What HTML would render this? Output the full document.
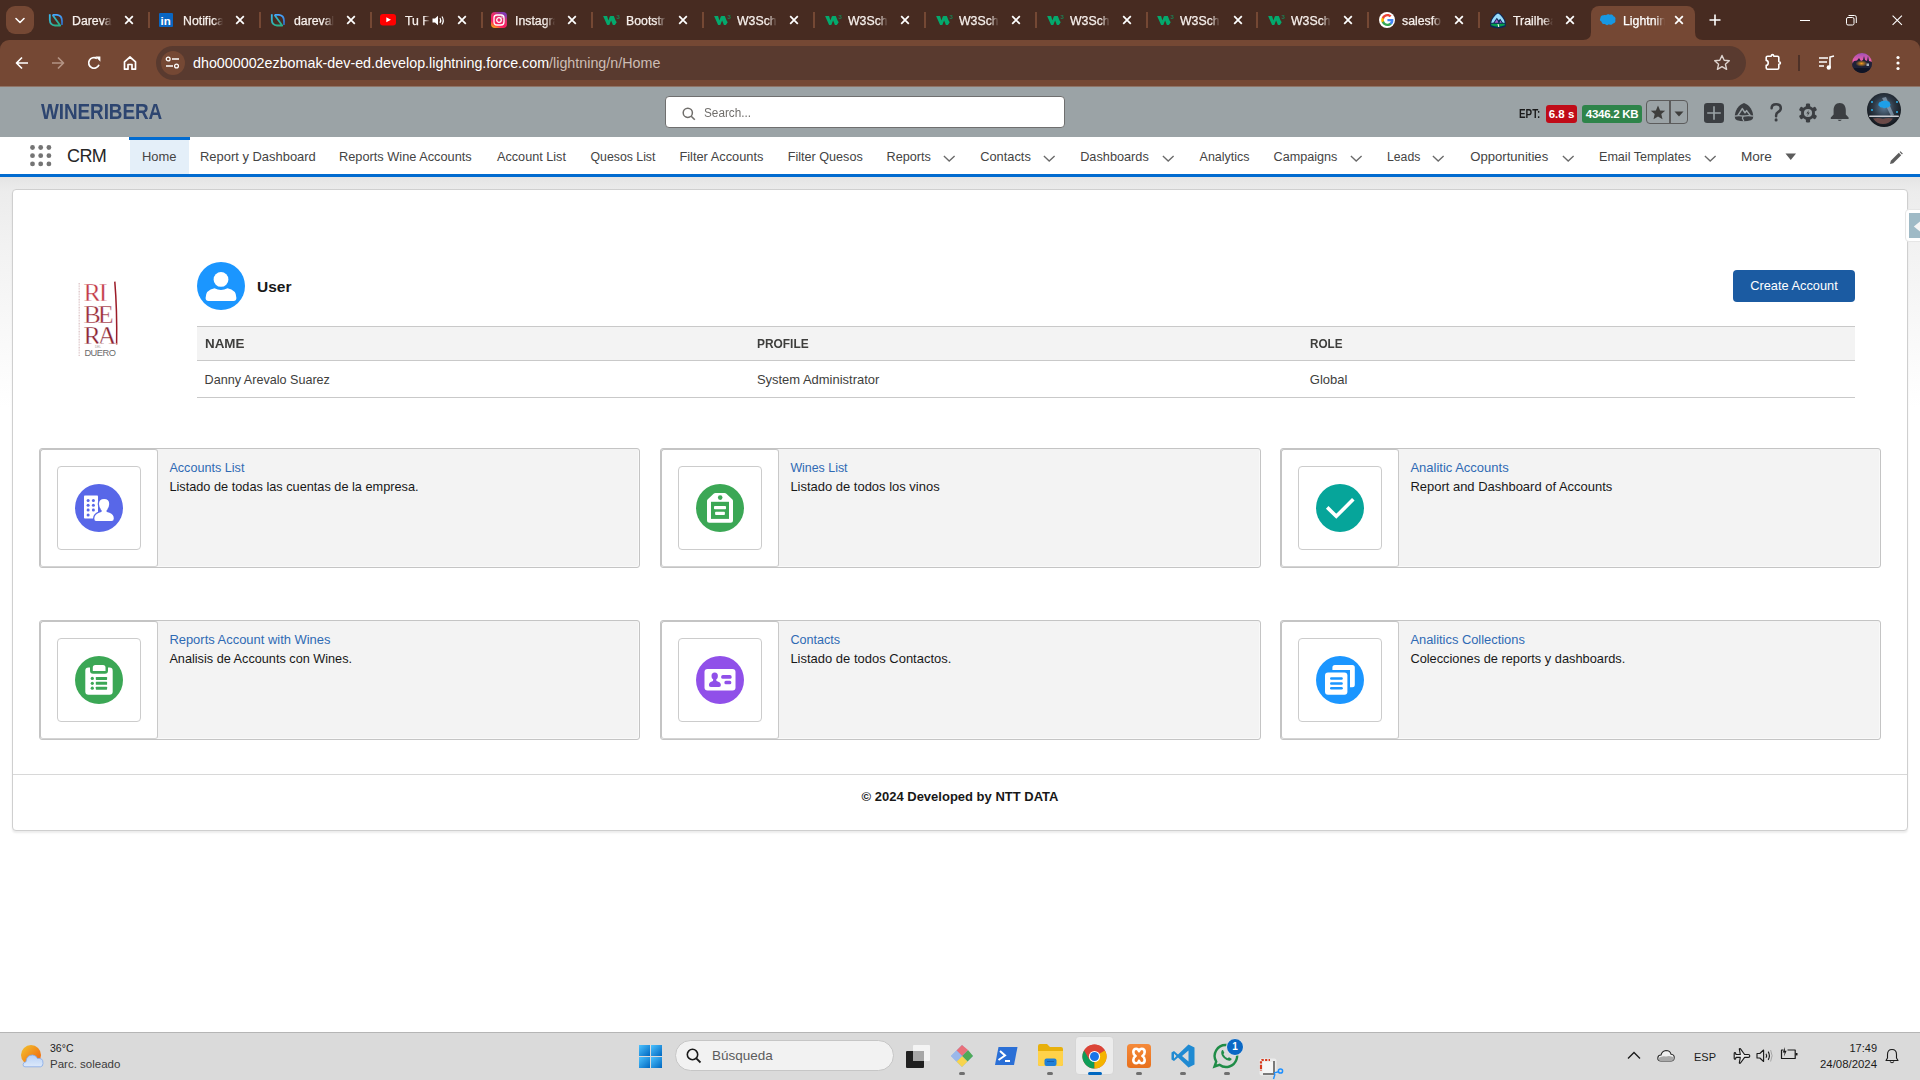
<!DOCTYPE html><html><head><meta charset="utf-8"><title>Lightning</title><style>
*{margin:0;padding:0;box-sizing:border-box}
html,body{width:1920px;height:1080px;overflow:hidden;background:#fff;font-family:"Liberation Sans", sans-serif}
.a{position:absolute}
.t{position:absolute;white-space:nowrap}
svg{position:absolute;overflow:visible}
</style></head><body>
<div class="a" style="left:0;top:0;width:1920px;height:50px;background:#472b21"></div>
<div class="a" style="left:6px;top:6px;width:28px;height:28px;border-radius:9px;background:#754834"></div>
<svg style="left:0;top:0" width="40" height="40"><path d="M16 18.5 L20 22.5 L24 18.5" fill="none" stroke="#fff" stroke-width="1.6" stroke-linecap="round" stroke-linejoin="round"/></svg>
<svg style="left:48px;top:12px" width="16" height="16"><defs><linearGradient id="dg0" x1="0" y1="0" x2="0.6" y2="1"><stop offset="0" stop-color="#3ab6ee"/><stop offset="1" stop-color="#2bb08a"/></linearGradient><linearGradient id="db0" x1="0" y1="0" x2="0" y2="1"><stop offset="0" stop-color="#46a6ff"/><stop offset="1" stop-color="#2f64b8"/></linearGradient></defs><path d="M1.8 2.3 V8 Q2 13.2 7 13.5 H12.2 L4.6 3" fill="none" stroke="url(#dg0)" stroke-width="1.8" stroke-linejoin="round"/><path d="M4.6 2.8 H9 Q14 3.3 14 9 V13" fill="none" stroke="url(#db0)" stroke-width="1.8"/></svg>
<div class="t" style="left:72px;top:13px;width:40px;overflow:hidden;font-size:12.3px;line-height:16px;color:#f7f0ec;-webkit-text-stroke:0.25px #f7f0ec;-webkit-mask-image:linear-gradient(to right,#000 76%,transparent 100%)">Dareval</div>
<svg style="left:124px;top:15px" width="10" height="10"><path d="M1.2 1.2 L8.8 8.8 M8.8 1.2 L1.2 8.8" stroke="#fff" stroke-width="1.75"/></svg>
<div class="a" style="left:148px;top:12px;width:2px;height:16px;background:#754834"></div>
<svg style="left:159px;top:13px" width="15" height="15"><rect width="14" height="14" fill="#0a66c2" rx="1"/><text x="1.6" y="12" font-family="Liberation Sans" font-weight="bold" font-size="11.5" fill="#fff">in</text></svg>
<div class="t" style="left:183px;top:13px;width:40px;overflow:hidden;font-size:12.3px;line-height:16px;color:#f7f0ec;-webkit-text-stroke:0.25px #f7f0ec;-webkit-mask-image:linear-gradient(to right,#000 76%,transparent 100%)">Notifica</div>
<svg style="left:235px;top:15px" width="10" height="10"><path d="M1.2 1.2 L8.8 8.8 M8.8 1.2 L1.2 8.8" stroke="#fff" stroke-width="1.75"/></svg>
<div class="a" style="left:259px;top:12px;width:2px;height:16px;background:#754834"></div>
<svg style="left:270px;top:12px" width="16" height="16"><defs><linearGradient id="dg2" x1="0" y1="0" x2="0.6" y2="1"><stop offset="0" stop-color="#3ab6ee"/><stop offset="1" stop-color="#2bb08a"/></linearGradient><linearGradient id="db2" x1="0" y1="0" x2="0" y2="1"><stop offset="0" stop-color="#46a6ff"/><stop offset="1" stop-color="#2f64b8"/></linearGradient></defs><path d="M1.8 2.3 V8 Q2 13.2 7 13.5 H12.2 L4.6 3" fill="none" stroke="url(#dg2)" stroke-width="1.8" stroke-linejoin="round"/><path d="M4.6 2.8 H9 Q14 3.3 14 9 V13" fill="none" stroke="url(#db2)" stroke-width="1.8"/></svg>
<div class="t" style="left:294px;top:13px;width:40px;overflow:hidden;font-size:12.3px;line-height:16px;color:#f7f0ec;-webkit-text-stroke:0.25px #f7f0ec;-webkit-mask-image:linear-gradient(to right,#000 76%,transparent 100%)">dareval</div>
<svg style="left:346px;top:15px" width="10" height="10"><path d="M1.2 1.2 L8.8 8.8 M8.8 1.2 L1.2 8.8" stroke="#fff" stroke-width="1.75"/></svg>
<div class="a" style="left:370px;top:12px;width:2px;height:16px;background:#754834"></div>
<svg style="left:380px;top:14px" width="16" height="12"><rect width="16" height="11.5" rx="3" fill="#ff0000"/><path d="M6.3 3.2 L11 5.75 L6.3 8.3Z" fill="#fff"/></svg>
<div class="t" style="left:405px;top:13px;width:25px;overflow:hidden;font-size:12.3px;line-height:16px;color:#f7f0ec;-webkit-text-stroke:0.25px #f7f0ec;-webkit-mask-image:linear-gradient(to right,#000 76%,transparent 100%)">Tu F</div>
<svg style="left:457px;top:15px" width="10" height="10"><path d="M1.2 1.2 L8.8 8.8 M8.8 1.2 L1.2 8.8" stroke="#fff" stroke-width="1.75"/></svg>
<div class="a" style="left:481px;top:12px;width:2px;height:16px;background:#754834"></div>
<svg style="left:491px;top:12px" width="16" height="16"><defs><linearGradient id="ig" x1="0" y1="1" x2="0.6" y2="0"><stop offset="0" stop-color="#fdd000"/><stop offset="0.35" stop-color="#fd1d5f"/><stop offset="0.75" stop-color="#e1306c"/><stop offset="1" stop-color="#833ab4"/></linearGradient></defs><rect width="16" height="16" rx="4" fill="url(#ig)"/><rect x="3" y="3" width="10" height="10" rx="3" fill="none" stroke="#fff" stroke-width="1.3"/><circle cx="8" cy="8" r="2.3" fill="none" stroke="#fff" stroke-width="1.3"/><circle cx="11" cy="5" r="0.7" fill="#fff"/></svg>
<div class="t" style="left:515px;top:13px;width:40px;overflow:hidden;font-size:12.3px;line-height:16px;color:#f7f0ec;-webkit-text-stroke:0.25px #f7f0ec;-webkit-mask-image:linear-gradient(to right,#000 76%,transparent 100%)">Instagra</div>
<svg style="left:567px;top:15px" width="10" height="10"><path d="M1.2 1.2 L8.8 8.8 M8.8 1.2 L1.2 8.8" stroke="#fff" stroke-width="1.75"/></svg>
<div class="a" style="left:591px;top:12px;width:2px;height:16px;background:#754834"></div>
<svg style="left:602px;top:14px" width="19" height="12"><path d="M1.1 1.9 H5.1 L6.4 6.4 L7.8 2.4 Q8 1.9 8.6 1.9 H11.8 L13.6 6.4 L14.7 8.2 L12.9 10.9 H10.9 L9.1 6.4 L7.3 10.9 H5.1Z" fill="#04a96d"/><text x="14.6" y="4.6" font-family="Liberation Sans" font-weight="bold" font-size="6.2" fill="#1b7a52">3</text></svg>
<div class="t" style="left:626px;top:13px;width:40px;overflow:hidden;font-size:12.3px;line-height:16px;color:#f7f0ec;-webkit-text-stroke:0.25px #f7f0ec;-webkit-mask-image:linear-gradient(to right,#000 76%,transparent 100%)">Bootstr</div>
<svg style="left:678px;top:15px" width="10" height="10"><path d="M1.2 1.2 L8.8 8.8 M8.8 1.2 L1.2 8.8" stroke="#fff" stroke-width="1.75"/></svg>
<div class="a" style="left:702px;top:12px;width:2px;height:16px;background:#754834"></div>
<svg style="left:713px;top:14px" width="19" height="12"><path d="M1.1 1.9 H5.1 L6.4 6.4 L7.8 2.4 Q8 1.9 8.6 1.9 H11.8 L13.6 6.4 L14.7 8.2 L12.9 10.9 H10.9 L9.1 6.4 L7.3 10.9 H5.1Z" fill="#04a96d"/><text x="14.6" y="4.6" font-family="Liberation Sans" font-weight="bold" font-size="6.2" fill="#1b7a52">3</text></svg>
<div class="t" style="left:737px;top:13px;width:40px;overflow:hidden;font-size:12.3px;line-height:16px;color:#f7f0ec;-webkit-text-stroke:0.25px #f7f0ec;-webkit-mask-image:linear-gradient(to right,#000 76%,transparent 100%)">W3Scho</div>
<svg style="left:789px;top:15px" width="10" height="10"><path d="M1.2 1.2 L8.8 8.8 M8.8 1.2 L1.2 8.8" stroke="#fff" stroke-width="1.75"/></svg>
<div class="a" style="left:813px;top:12px;width:2px;height:16px;background:#754834"></div>
<svg style="left:824px;top:14px" width="19" height="12"><path d="M1.1 1.9 H5.1 L6.4 6.4 L7.8 2.4 Q8 1.9 8.6 1.9 H11.8 L13.6 6.4 L14.7 8.2 L12.9 10.9 H10.9 L9.1 6.4 L7.3 10.9 H5.1Z" fill="#04a96d"/><text x="14.6" y="4.6" font-family="Liberation Sans" font-weight="bold" font-size="6.2" fill="#1b7a52">3</text></svg>
<div class="t" style="left:848px;top:13px;width:40px;overflow:hidden;font-size:12.3px;line-height:16px;color:#f7f0ec;-webkit-text-stroke:0.25px #f7f0ec;-webkit-mask-image:linear-gradient(to right,#000 76%,transparent 100%)">W3Scho</div>
<svg style="left:900px;top:15px" width="10" height="10"><path d="M1.2 1.2 L8.8 8.8 M8.8 1.2 L1.2 8.8" stroke="#fff" stroke-width="1.75"/></svg>
<div class="a" style="left:924px;top:12px;width:2px;height:16px;background:#754834"></div>
<svg style="left:935px;top:14px" width="19" height="12"><path d="M1.1 1.9 H5.1 L6.4 6.4 L7.8 2.4 Q8 1.9 8.6 1.9 H11.8 L13.6 6.4 L14.7 8.2 L12.9 10.9 H10.9 L9.1 6.4 L7.3 10.9 H5.1Z" fill="#04a96d"/><text x="14.6" y="4.6" font-family="Liberation Sans" font-weight="bold" font-size="6.2" fill="#1b7a52">3</text></svg>
<div class="t" style="left:959px;top:13px;width:40px;overflow:hidden;font-size:12.3px;line-height:16px;color:#f7f0ec;-webkit-text-stroke:0.25px #f7f0ec;-webkit-mask-image:linear-gradient(to right,#000 76%,transparent 100%)">W3Scho</div>
<svg style="left:1011px;top:15px" width="10" height="10"><path d="M1.2 1.2 L8.8 8.8 M8.8 1.2 L1.2 8.8" stroke="#fff" stroke-width="1.75"/></svg>
<div class="a" style="left:1035px;top:12px;width:2px;height:16px;background:#754834"></div>
<svg style="left:1046px;top:14px" width="19" height="12"><path d="M1.1 1.9 H5.1 L6.4 6.4 L7.8 2.4 Q8 1.9 8.6 1.9 H11.8 L13.6 6.4 L14.7 8.2 L12.9 10.9 H10.9 L9.1 6.4 L7.3 10.9 H5.1Z" fill="#04a96d"/><text x="14.6" y="4.6" font-family="Liberation Sans" font-weight="bold" font-size="6.2" fill="#1b7a52">3</text></svg>
<div class="t" style="left:1070px;top:13px;width:40px;overflow:hidden;font-size:12.3px;line-height:16px;color:#f7f0ec;-webkit-text-stroke:0.25px #f7f0ec;-webkit-mask-image:linear-gradient(to right,#000 76%,transparent 100%)">W3Scho</div>
<svg style="left:1122px;top:15px" width="10" height="10"><path d="M1.2 1.2 L8.8 8.8 M8.8 1.2 L1.2 8.8" stroke="#fff" stroke-width="1.75"/></svg>
<div class="a" style="left:1146px;top:12px;width:2px;height:16px;background:#754834"></div>
<svg style="left:1156px;top:14px" width="19" height="12"><path d="M1.1 1.9 H5.1 L6.4 6.4 L7.8 2.4 Q8 1.9 8.6 1.9 H11.8 L13.6 6.4 L14.7 8.2 L12.9 10.9 H10.9 L9.1 6.4 L7.3 10.9 H5.1Z" fill="#04a96d"/><text x="14.6" y="4.6" font-family="Liberation Sans" font-weight="bold" font-size="6.2" fill="#1b7a52">3</text></svg>
<div class="t" style="left:1180px;top:13px;width:40px;overflow:hidden;font-size:12.3px;line-height:16px;color:#f7f0ec;-webkit-text-stroke:0.25px #f7f0ec;-webkit-mask-image:linear-gradient(to right,#000 76%,transparent 100%)">W3Scho</div>
<svg style="left:1233px;top:15px" width="10" height="10"><path d="M1.2 1.2 L8.8 8.8 M8.8 1.2 L1.2 8.8" stroke="#fff" stroke-width="1.75"/></svg>
<div class="a" style="left:1256px;top:12px;width:2px;height:16px;background:#754834"></div>
<svg style="left:1267px;top:14px" width="19" height="12"><path d="M1.1 1.9 H5.1 L6.4 6.4 L7.8 2.4 Q8 1.9 8.6 1.9 H11.8 L13.6 6.4 L14.7 8.2 L12.9 10.9 H10.9 L9.1 6.4 L7.3 10.9 H5.1Z" fill="#04a96d"/><text x="14.6" y="4.6" font-family="Liberation Sans" font-weight="bold" font-size="6.2" fill="#1b7a52">3</text></svg>
<div class="t" style="left:1291px;top:13px;width:40px;overflow:hidden;font-size:12.3px;line-height:16px;color:#f7f0ec;-webkit-text-stroke:0.25px #f7f0ec;-webkit-mask-image:linear-gradient(to right,#000 76%,transparent 100%)">W3Scho</div>
<svg style="left:1343px;top:15px" width="10" height="10"><path d="M1.2 1.2 L8.8 8.8 M8.8 1.2 L1.2 8.8" stroke="#fff" stroke-width="1.75"/></svg>
<div class="a" style="left:1367px;top:12px;width:2px;height:16px;background:#754834"></div>
<svg style="left:1379px;top:12px" width="16" height="16"><circle cx="8" cy="8" r="8" fill="#fff"/><g transform="translate(8.3 8) scale(1.3) translate(-7.9 -8)"><path d="M12.6 8.1c0-.3 0-.6-.1-.9H8v1.7h2.6c-.1.6-.5 1.1-1 1.4v1.2h1.6c.9-.9 1.4-2.1 1.4-3.4z" fill="#4285f4"/><path d="M8 12.7c1.3 0 2.4-.4 3.2-1.2L9.6 10.3c-.4.3-1 .5-1.6.5-1.2 0-2.3-.8-2.6-2H3.7v1.2C4.5 11.6 6.1 12.7 8 12.7z" fill="#34a853"/><path d="M5.4 8.8c-.1-.3-.1-.5-.1-.8s0-.5.1-.8V6H3.7C3.4 6.6 3.2 7.3 3.2 8s.2 1.4.5 2l1.7-1.2z" fill="#fbbc05"/><path d="M8 5.2c.7 0 1.3.2 1.8.7l1.4-1.4C10.4 3.7 9.3 3.3 8 3.3 6.1 3.3 4.5 4.4 3.7 6l1.7 1.2c.3-1.2 1.4-2 2.6-2z" fill="#ea4335"/></g></svg>
<div class="t" style="left:1402px;top:13px;width:40px;overflow:hidden;font-size:12.3px;line-height:16px;color:#f7f0ec;-webkit-text-stroke:0.25px #f7f0ec;-webkit-mask-image:linear-gradient(to right,#000 76%,transparent 100%)">salesfo</div>
<svg style="left:1454px;top:15px" width="10" height="10"><path d="M1.2 1.2 L8.8 8.8 M8.8 1.2 L1.2 8.8" stroke="#fff" stroke-width="1.75"/></svg>
<div class="a" style="left:1478px;top:12px;width:2px;height:16px;background:#754834"></div>
<svg style="left:1488px;top:10px" width="20" height="20"><path d="M10 2.2 Q12.5 3.2 15 6.5 Q17.8 10 17.8 13 V15.5 Q17.8 16.5 16.5 17 Q10 19.6 3.5 17 Q2.2 16.5 2.2 15.5 V13 Q2.2 10 5 6.5 Q7.5 3.2 10 2.2Z" fill="#0b2a5a"/><path d="M10 3.6 Q12 4.4 14.2 7.3 Q16.5 10.2 16.8 12.8 H3.2 Q3.5 10.2 5.8 7.3 Q8 4.4 10 3.6Z" fill="#98dbfa"/><path d="M5.3 13 L8.8 7.8 L10.8 10.3 L12.2 8.8 L15 13Z" fill="#0b2a5a"/><path d="M6.6 12.8 L8.9 9.3 L10.4 12.8Z M11.4 12.8 L12.3 10.4 L13.8 12.8Z" fill="#a865c9"/><path d="M3.2 13.7 H16.8 V15.3 Q10 18.2 3.2 15.3Z" fill="#05a04c"/><path d="M10 14 L10.8 17" stroke="#fff" stroke-width="1"/></svg>
<div class="t" style="left:1513px;top:13px;width:40px;overflow:hidden;font-size:12.3px;line-height:16px;color:#f7f0ec;-webkit-text-stroke:0.25px #f7f0ec;-webkit-mask-image:linear-gradient(to right,#000 76%,transparent 100%)">Trailhea</div>
<svg style="left:1565px;top:15px" width="10" height="10"><path d="M1.2 1.2 L8.8 8.8 M8.8 1.2 L1.2 8.8" stroke="#fff" stroke-width="1.75"/></svg>
<svg style="left:432px;top:15px" width="13" height="11"><path d="M0.5 3.5 L3 3.5 L6 0.8 L6 10.2 L3 7.5 L0.5 7.5Z" fill="#fff"/><path d="M8 3 Q9.5 5.5 8 8" fill="none" stroke="#fff" stroke-width="1.2"/><path d="M10 1.5 Q12.5 5.5 10 9.5" fill="none" stroke="#fff" stroke-width="1.2"/></svg>
<div class="a" style="left:1591px;top:6px;width:104px;height:36px;background:#754834;border-radius:8px 8px 0 0"></div>
<svg style="left:1583px;top:32px" width="8" height="8"><path d="M0 8 Q8 8 8 0 L8 8Z" fill="#754834"/></svg>
<svg style="left:1695px;top:32px" width="8" height="8"><path d="M8 8 Q0 8 0 0 L0 8Z" fill="#754834"/></svg>
<svg style="left:1599px;top:14px" width="17" height="12"><path d="M7 1.2 C8 0.2 9.6 0 10.8 0.8 C12 0 14 0.6 14.5 2.2 C16.2 2.6 17 4.4 16.3 6 C17 7.6 15.8 9.5 14 9.4 C13.2 10.9 11.2 11.2 10 10.3 C8.9 11.5 6.8 11.4 6 10 C4.3 10.5 2.6 9.4 2.6 7.8 C0.9 7.4 0.3 5.3 1.5 4.1 C1.1 2.3 3 0.6 4.9 1.3 C5.5 0.9 6.3 0.9 7 1.2Z" fill="#1798e3"/></svg>
<div class="t" style="left:1623px;top:13px;width:42px;overflow:hidden;font-size:12.3px;line-height:16px;color:#fff;-webkit-text-stroke:0.25px #fff;-webkit-mask-image:linear-gradient(to right,#000 76%,transparent 100%)">Lightning</div>
<svg style="left:1674px;top:15px" width="10" height="10"><path d="M1.2 1.2 L8.8 8.8 M8.8 1.2 L1.2 8.8" stroke="#fff" stroke-width="1.75"/></svg>
<svg style="left:1709px;top:14px" width="12" height="12"><path d="M6 0.5 V11.5 M0.5 6 H11.5" stroke="#fff" stroke-width="1.6"/></svg>
<div class="a" style="left:1800px;top:20px;width:10px;height:1px;background:#fff"></div>
<svg style="left:1846px;top:15px" width="11" height="11"><rect x="0.5" y="2.5" width="7.5" height="7.5" rx="1.5" fill="none" stroke="#fff" stroke-width="1"/><path d="M2.5 0.5 H8.5 Q10.3 0.5 10.3 2.3 V8" fill="none" stroke="#fff" stroke-width="1"/></svg>
<svg style="left:1892px;top:15px" width="11" height="11"><path d="M0.6 0.6 L9.9 9.9 M9.9 0.6 L0.6 9.9" stroke="#fff" stroke-width="1.1"/></svg>
<div class="a" style="left:0;top:40px;width:1920px;height:46px;background:#754834;border-radius:9px 9px 0 0"></div>
<svg style="left:14px;top:55px" width="16" height="16"><path d="M14 8 H3 M8 2.5 L2.5 8 L8 13.5" fill="none" stroke="#fff" stroke-width="1.7" stroke-linejoin="round"/></svg>
<svg style="left:50px;top:55px" width="16" height="16"><path d="M2 8 H13 M8 2.5 L13.5 8 L8 13.5" fill="none" stroke="#b39384" stroke-width="1.7" stroke-linejoin="round"/></svg>
<svg style="left:86px;top:55px" width="16" height="16"><path d="M12.98 9.71 A5.3 5.3 0 1 1 10.9 3.5" fill="none" stroke="#fff" stroke-width="1.7"/><path d="M9.3 1.6 H14.4 V6.7Z" fill="#fff"/></svg>
<svg style="left:122px;top:55px" width="16" height="17"><path d="M2.5 14.2 V6.8 L8 2 L13.5 6.8 V14.2 H10 V9.5 H6 V14.2Z" fill="none" stroke="#fff" stroke-width="1.7" stroke-linejoin="round"/></svg>
<div class="a" style="left:156px;top:46px;width:1590px;height:34px;border-radius:17px;background:#593a2f"></div>
<div class="a" style="left:161px;top:51px;width:24px;height:24px;border-radius:12px;background:#754834"></div>
<svg style="left:165px;top:56px" width="16" height="14"><circle cx="3.2" cy="3" r="1.9" fill="none" stroke="#fff" stroke-width="1.3"/><path d="M7 3 H14" stroke="#fff" stroke-width="1.5"/><circle cx="11.5" cy="10" r="1.9" fill="none" stroke="#fff" stroke-width="1.3"/><path d="M1 10 H8" stroke="#fff" stroke-width="1.5"/></svg>
<div class="t" style="left:193px;top:54px;font-size:14.3px;line-height:18px;color:#fff">dho000002ezbomak-dev-ed.develop.lightning.force.com<span style="color:#cdbdb5">/lightning/n/Home</span></div>
<svg style="left:1713px;top:54px" width="18" height="18"><path d="M9 1.5 L11.2 6.3 L16.3 6.8 L12.4 10.2 L13.6 15.3 L9 12.6 L4.4 15.3 L5.6 10.2 L1.7 6.8 L6.8 6.3Z" fill="none" stroke="#ddd3ce" stroke-width="1.4" stroke-linejoin="round"/></svg>
<svg style="left:1763px;top:53px" width="20" height="20"><path d="M3.2 4.6 Q3.2 3.2 4.6 3.2 H8.2 Q8.4 1.6 9.5 1.6 Q10.6 1.6 10.8 3.2 H14.4 Q15.8 3.2 15.8 4.6 V8.6 Q17.4 8.8 17.4 9.9 Q17.4 11 15.8 11.2 V14.8 Q15.8 16.2 14.4 16.2 H4.6 Q3.2 16.2 3.2 14.8 V12.4 Q5.2 12.2 5.2 9.9 Q5.2 7.6 3.2 7.4Z" fill="none" stroke="#fff" stroke-width="1.6" stroke-linejoin="round"/></svg>
<div class="a" style="left:1798px;top:55px;width:2px;height:16px;background:#4e3127"></div>
<svg style="left:1818px;top:55px" width="18" height="16"><path d="M1 3 H10 M1 7 H9 M1 11 H6" stroke="#fff" stroke-width="1.6"/><path d="M12 12.5 V2 L16 1" fill="none" stroke="#fff" stroke-width="1.6"/><circle cx="10.8" cy="12.5" r="2.2" fill="#fff"/></svg>
<svg style="left:1852px;top:53px" width="20" height="20"><defs><clipPath id="pc"><circle cx="10" cy="10" r="10"/></clipPath><linearGradient id="pg" x1="0" y1="0" x2="0" y2="1"><stop offset="0" stop-color="#a050b8"/><stop offset="0.4" stop-color="#f060a8"/><stop offset="0.55" stop-color="#2a2340"/><stop offset="1" stop-color="#0d1420"/></linearGradient><radialGradient id="po" cx="0.5" cy="0.5" r="0.5"><stop offset="0" stop-color="#f39a1a"/><stop offset="1" stop-color="#f39a1a" stop-opacity="0"/></radialGradient></defs><g clip-path="url(#pc)"><rect width="20" height="20" fill="url(#pg)"/><path d="M0 12 L2 8 L5 7.5 L7 5 L9 8 L11 7 L12 3 L13 7 L15 8 L16 3 L17 8 L20 9 V20 H0Z" fill="#1f2238"/><ellipse cx="9.5" cy="10.5" rx="6" ry="3.2" fill="url(#po)"/><rect x="14.5" y="10.5" width="2.5" height="2.5" fill="#c8d4d8" opacity="0.8"/><path d="M0 15 H20 V20 H0Z" fill="#0c1220" opacity="0.8"/></g></svg>
<svg style="left:1895px;top:55px" width="6" height="16"><circle cx="3" cy="2.5" r="1.6" fill="#fff"/><circle cx="3" cy="8" r="1.6" fill="#fff"/><circle cx="3" cy="13.5" r="1.6" fill="#fff"/></svg>
<div class="a" style="left:0;top:86px;width:1920px;height:51px;background:#9ba3a6"></div>
<div class="a" style="left:0;top:86px;width:1920px;height:1px;background:#8f7467"></div>
<div class="t" style="left:41px;top:99px;font-size:22px;line-height:26px;font-weight:bold;color:#2d4570;transform:scaleX(0.86);transform-origin:0 0;letter-spacing:-0.1px">WINERIBERA</div>
<div class="a" style="left:665px;top:96px;width:400px;height:32px;border:1px solid #6f6f6f;border-radius:4px;background:#fff"></div>
<svg style="left:682px;top:107px" width="14" height="14"><circle cx="5.8" cy="5.8" r="4.6" fill="none" stroke="#706e6b" stroke-width="1.5"/><path d="M9.2 9.2 L12.8 12.8" stroke="#706e6b" stroke-width="1.6"/></svg>
<div class="t" style="left:703.5px;top:105px;font-size:12px;line-height:16px;color:#706e6b;transform:scaleX(0.98);transform-origin:0 0">Search...</div>
<div class="t" style="left:1519px;top:107px;font-size:12px;line-height:14px;font-weight:bold;color:#1a1a1a;transform:scaleX(0.82);transform-origin:0 0">EPT:</div>
<div class="a" style="left:1546px;top:105px;width:31px;height:18px;border-radius:3px;background:#c00b18"></div>
<div class="t" style="left:1546px;top:107px;width:31px;text-align:center;font-size:11.5px;line-height:14px;font-weight:bold;color:#fff">6.8 s</div>
<div class="a" style="left:1582px;top:105px;width:60px;height:18px;border-radius:3px;background:#2e844a"></div>
<div class="t" style="left:1582px;top:107px;width:60px;text-align:center;font-size:11.5px;line-height:14px;font-weight:bold;color:#fff;letter-spacing:-0.3px">4346.2 KB</div>
<div class="a" style="left:1646px;top:100px;width:42px;height:24px;border:1px solid #5c5c5c;border-radius:4px"></div>
<div class="a" style="left:1669px;top:100px;width:2px;height:24px;background:#5c5c5c"></div>
<svg style="left:1649px;top:104px" width="18" height="17"><path d="M9 1.5 L11.1 6.4 L16.2 6.8 L12.3 10.1 L13.5 15.3 L9 12.5 L4.5 15.3 L5.7 10.1 L1.8 6.8 L6.9 6.4Z" fill="#3e3e3c"/></svg>
<svg style="left:1674px;top:111px" width="10" height="6"><path d="M0.5 0.5 L9.5 0.5 L5 5.5Z" fill="#3e3e3c"/></svg>
<svg style="left:1704px;top:103px" width="20" height="20"><rect x="0" y="0" width="20" height="20" rx="3.2" fill="#3b3e42"/><path d="M10 3.2 V16.8 M3.2 10 H16.8" stroke="#9ba3a6" stroke-width="1.6"/></svg>
<svg style="left:1734px;top:102px" width="20" height="20"><path d="M0.8 15 C0.8 8.5 4.5 3 10 1 C15.5 3 19.2 8.5 19.2 15 Q19.2 17.6 17 18.3 Q10 20.3 3 18.3 Q0.8 17.6 0.8 15Z" fill="#3b3e42"/><path d="M3.8 13.6 L8.3 6.6 L11 10.8 L12.6 8.6 L16.4 13.6" fill="none" stroke="#9ba3a6" stroke-width="1.5" stroke-linejoin="round"/><path d="M0.5 14.2 Q5 13.2 9.2 14.2 L8.4 16.2 L10 19.5" fill="none" stroke="#9ba3a6" stroke-width="1.2"/><path d="M9.2 14.2 Q14.5 13 19.5 14.2" fill="none" stroke="#9ba3a6" stroke-width="1.2"/></svg>
<svg style="left:1770px;top:103px" width="13" height="19"><path d="M1.6 5.2 Q1.6 1.3 6.2 1.3 Q10.8 1.3 10.8 5.2 Q10.8 7.6 8 9.2 Q6.1 10.3 6.1 12.6 V13.3" fill="none" stroke="#3b3e42" stroke-width="2.5" stroke-linecap="round"/><circle cx="6.1" cy="16.9" r="1.55" fill="#3b3e42"/></svg>
<svg style="left:1798px;top:103px" width="20" height="20"><rect x="7.9" y="0.6" width="4.2" height="5" rx="1.2" fill="#3b3e42" transform="rotate(0 10 10)"/><rect x="7.9" y="0.6" width="4.2" height="5" rx="1.2" fill="#3b3e42" transform="rotate(60 10 10)"/><rect x="7.9" y="0.6" width="4.2" height="5" rx="1.2" fill="#3b3e42" transform="rotate(120 10 10)"/><rect x="7.9" y="0.6" width="4.2" height="5" rx="1.2" fill="#3b3e42" transform="rotate(180 10 10)"/><rect x="7.9" y="0.6" width="4.2" height="5" rx="1.2" fill="#3b3e42" transform="rotate(240 10 10)"/><rect x="7.9" y="0.6" width="4.2" height="5" rx="1.2" fill="#3b3e42" transform="rotate(300 10 10)"/><circle cx="10" cy="10" r="7" fill="#3b3e42"/><circle cx="10" cy="10" r="4.1" fill="#9ba3a6"/><path d="M10.9 6.9 L8.3 10.6 H10 L9.2 13.2 L11.8 9.4 H10.1Z" fill="#3b3e42"/></svg>
<svg style="left:1830px;top:102px" width="20" height="20"><path d="M9.7 1 C13.9 1 15.8 4.2 15.8 8.2 V12.6 L18.6 15.5 V17 H0.8 V15.5 L3.6 12.6 V8.2 C3.6 4.2 5.5 1 9.7 1Z" fill="#3b3e42"/><path d="M7.6 17.8 H11.8 Q9.7 20.4 7.6 17.8Z" fill="#3b3e42"/></svg>
<svg style="left:1867px;top:93px" width="34" height="34"><defs><radialGradient id="av" cx="0.5" cy="0.42" r="0.55"><stop offset="0" stop-color="#5d7a95"/><stop offset="0.55" stop-color="#2e3a47"/><stop offset="1" stop-color="#15191f"/></radialGradient><clipPath id="avc"><circle cx="17" cy="17" r="17"/></clipPath></defs><circle cx="17" cy="17" r="17" fill="url(#av)"/><g clip-path="url(#avc)"><path d="M15 5 L19 4 L27 22 L24 23Z" fill="#a9c3d8" opacity="0.55"/><path d="M11.5 11 Q11.5 9 13.5 9 Q14.5 7.5 16.5 8 Q18.5 6.8 20.5 8.2 Q23 8 23 10.5 Q24.5 12 22.5 13.5 Q21.5 15 19.5 14.5 Q17.5 15.8 15.5 14.5 Q13 15 12.5 13.3 Q10.5 12.5 11.5 11Z" fill="#1e9fe8"/><circle cx="5" cy="9" r="1" fill="#2fb4f0"/><circle cx="30" cy="9" r="1" fill="#2fb4f0"/><circle cx="5" cy="17" r="1" fill="#2fb4f0"/><circle cx="30" cy="19" r="1" fill="#2fb4f0"/><rect x="2" y="22.5" width="30" height="1.6" rx="0.8" fill="#c9ccd2"/><path d="M6 25.5 Q12 24.5 16 26 Q20 24.5 26 25.5 Q22 31 16 31 Q10 31 6 25.5Z" fill="#6a4a48"/></g></svg>
<div class="a" style="left:0;top:137px;width:1920px;height:37px;background:#fff"></div>
<div class="a" style="left:0;top:174px;width:1920px;height:3px;background:#016bd0"></div>
<svg style="left:30px;top:145px" width="22" height="22"><circle cx="2.5" cy="2.5" r="2.4" fill="#747474"/><circle cx="10.7" cy="2.5" r="2.4" fill="#747474"/><circle cx="18.9" cy="2.5" r="2.4" fill="#747474"/><circle cx="2.5" cy="10.7" r="2.4" fill="#747474"/><circle cx="10.7" cy="10.7" r="2.4" fill="#747474"/><circle cx="18.9" cy="10.7" r="2.4" fill="#747474"/><circle cx="2.5" cy="18.9" r="2.4" fill="#747474"/><circle cx="10.7" cy="18.9" r="2.4" fill="#747474"/><circle cx="18.9" cy="18.9" r="2.4" fill="#747474"/></svg>
<div class="t" style="left:67px;top:145px;font-size:18px;line-height:22px;color:#262626;letter-spacing:-0.6px">CRM</div>
<div class="a" style="left:130px;top:140px;width:59px;height:34px;background:#e4eff9"></div>
<div class="a" style="left:129px;top:137px;width:61px;height:3px;background:#016bd0"></div>
<div class="t" style="left:142.0px;top:149px;font-size:12.93px;line-height:16px;color:#444444">Home</div>
<div class="t" style="left:200.0px;top:149px;font-size:12.94px;line-height:16px;color:#444444">Report y Dashboard</div>
<div class="t" style="left:339.0px;top:149px;font-size:12.77px;line-height:16px;color:#444444">Reports Wine Accounts</div>
<div class="t" style="left:497.0px;top:149px;font-size:12.66px;line-height:16px;color:#444444">Account List</div>
<div class="t" style="left:590.5px;top:149px;font-size:12.3px;line-height:16px;color:#444444">Quesos List</div>
<div class="t" style="left:679.4px;top:149px;font-size:12.82px;line-height:16px;color:#444444">Filter Accounts</div>
<div class="t" style="left:787.7px;top:149px;font-size:12.64px;line-height:16px;color:#444444">Filter Quesos</div>
<div class="t" style="left:886.5px;top:149px;font-size:12.68px;line-height:16px;color:#444444">Reports</div>
<svg style="left:943.4px;top:154.5px" width="13" height="8"><path d="M0.9 0.9 L6.2 6 L11.6 0.9" fill="none" stroke="#6a6a6a" stroke-width="1.35"/></svg>
<div class="t" style="left:980.2px;top:149px;font-size:12.83px;line-height:16px;color:#444444">Contacts</div>
<svg style="left:1043.4px;top:154.5px" width="13" height="8"><path d="M0.9 0.9 L6.2 6 L11.6 0.9" fill="none" stroke="#6a6a6a" stroke-width="1.35"/></svg>
<div class="t" style="left:1080.2px;top:149px;font-size:12.73px;line-height:16px;color:#444444">Dashboards</div>
<svg style="left:1161.5px;top:154.5px" width="13" height="8"><path d="M0.9 0.9 L6.2 6 L11.6 0.9" fill="none" stroke="#6a6a6a" stroke-width="1.35"/></svg>
<div class="t" style="left:1199.6px;top:149px;font-size:12.49px;line-height:16px;color:#444444">Analytics</div>
<div class="t" style="left:1273.6px;top:149px;font-size:12.62px;line-height:16px;color:#444444">Campaigns</div>
<svg style="left:1350.0px;top:154.5px" width="13" height="8"><path d="M0.9 0.9 L6.2 6 L11.6 0.9" fill="none" stroke="#6a6a6a" stroke-width="1.35"/></svg>
<div class="t" style="left:1387.0px;top:149px;font-size:12.24px;line-height:16px;color:#444444">Leads</div>
<svg style="left:1432.3px;top:154.5px" width="13" height="8"><path d="M0.9 0.9 L6.2 6 L11.6 0.9" fill="none" stroke="#6a6a6a" stroke-width="1.35"/></svg>
<div class="t" style="left:1470.3px;top:149px;font-size:13.1px;line-height:16px;color:#444444">Opportunities</div>
<svg style="left:1562.0px;top:154.5px" width="13" height="8"><path d="M0.9 0.9 L6.2 6 L11.6 0.9" fill="none" stroke="#6a6a6a" stroke-width="1.35"/></svg>
<div class="t" style="left:1599.0px;top:149px;font-size:12.59px;line-height:16px;color:#444444">Email Templates</div>
<svg style="left:1704.3px;top:154.5px" width="13" height="8"><path d="M0.9 0.9 L6.2 6 L11.6 0.9" fill="none" stroke="#6a6a6a" stroke-width="1.35"/></svg>
<div class="t" style="left:1740.9px;top:149px;font-size:13.6px;line-height:16px;color:#444444">More</div>
<svg style="left:1785px;top:153px" width="12" height="8"><path d="M0.5 0.5 H11 L5.75 7Z" fill="#5c5c5c"/></svg>
<svg style="left:1889px;top:151px" width="14" height="14"><path d="M1 13 L1.8 9.8 L9.8 1.8 L12.2 4.2 L4.2 12.2Z" fill="#5c5c5c"/><path d="M10.6 1 L11.4 0.2 L13.8 2.6 L13 3.4Z" fill="#5c5c5c"/></svg>
<div class="a" style="left:0;top:177px;width:1920px;height:855px;background:#fff"></div>
<div class="a" style="left:0;top:177px;width:1920px;height:230px;background:linear-gradient(#e4e4e4,#ececec 6%,#f2f2f2 30%,#fff)"></div>
<div class="a" style="left:12px;top:189px;width:1896px;height:642px;background:#fff;border:1px solid #cfcfcf;border-radius:4px;box-shadow:0 2px 2px rgba(0,0,0,0.08)"></div>
<div class="a" style="left:1905px;top:209px;width:20px;height:33px;background:#fff;border:1px solid #e6e6e6;border-radius:4px"></div>
<div class="a" style="left:1909px;top:213px;width:11px;height:25px;background:#9fbac6"></div>
<svg style="left:1913px;top:221px" width="8" height="12"><path d="M7 0.5 L0.8 5.5 L7 10.5Z" fill="#f5f5f5"/></svg>
<svg style="left:76px;top:280px" width="44" height="80">
<path d="M3.2 3 V76" stroke="#dcc4c6" stroke-width="1.3" stroke-dasharray="0.9 0.7"/>
<path d="M38.8 1.6 Q41.2 30 40.6 64.5" stroke="#9c1c28" stroke-width="1.5" fill="none"/>
<g font-family="Liberation Serif" font-size="26" stroke="#fff" stroke-width="0.35" paint-order="normal">
<text x="7.5" y="21.2" fill="#c23744" letter-spacing="-2">RI</text>
<text x="7.5" y="42.6" fill="#9a2c38" letter-spacing="-3.2">BE</text>
<text x="7.5" y="63.9" fill="#8a2230" letter-spacing="-3">RA</text>
</g>
<text x="19" y="67.5" font-family="Liberation Sans" font-size="3" fill="#999">DEL</text>
<text x="8.4" y="76" font-family="Liberation Sans" font-size="9.3" fill="#6a6a6a" letter-spacing="-0.5">DUERO</text>
</svg>
<svg style="left:197px;top:262px" width="48" height="48"><circle cx="24" cy="24" r="24" fill="#1b96ff"/><circle cx="24" cy="17.4" r="7.4" fill="#fff"/><path d="M8.6 36 Q8.6 28 17.5 26.3 Q24 29.5 30.5 26.3 Q39.4 28 39.4 36 Q39.4 39 36.5 39 H11.5 Q8.6 39 8.6 36Z" fill="#fff"/></svg>
<div class="t" style="left:257px;top:277px;font-size:15.5px;line-height:20px;font-weight:bold;color:#181818">User</div>
<div class="a" style="left:1733px;top:270px;width:122px;height:32px;border-radius:4px;background:#1b5ba2"></div>
<div class="t" style="left:1733px;top:278px;width:122px;text-align:center;font-size:12.8px;line-height:16px;color:#fff">Create Account</div>
<div class="a" style="left:197px;top:326px;width:1658px;height:1px;background:#c9c9c9"></div>
<div class="a" style="left:197px;top:327px;width:1658px;height:33px;background:#f3f3f3"></div>
<div class="a" style="left:197px;top:360px;width:1658px;height:1px;background:#c9c9c9"></div>
<div class="a" style="left:197px;top:397px;width:1658px;height:1px;background:#c9c9c9"></div>
<div class="t" style="left:205.1px;top:336px;font-size:13px;line-height:16px;font-weight:bold;color:#3e3e3c;transform:scaleX(1.03);transform-origin:0 0">NAME</div>
<div class="t" style="left:757.4px;top:336px;font-size:13px;line-height:16px;font-weight:bold;color:#3e3e3c;transform:scaleX(0.917);transform-origin:0 0">PROFILE</div>
<div class="t" style="left:1310.3px;top:336px;font-size:13px;line-height:16px;font-weight:bold;color:#3e3e3c;transform:scaleX(0.9);transform-origin:0 0">ROLE</div>
<div class="t" style="left:204.6px;top:372px;font-size:12.6px;line-height:16px;color:#3e3e3c">Danny Arevalo Suarez</div>
<div class="t" style="left:756.9px;top:372px;font-size:12.96px;line-height:16px;color:#3e3e3c">System Administrator</div>
<div class="t" style="left:1309.8px;top:372px;font-size:13px;line-height:16px;color:#3e3e3c">Global</div>
<div class="a" style="left:39px;top:448px;width:601px;height:120px;background:#f3f3f3;border:1px solid #c4c4c4;border-radius:3px;box-shadow:inset -1px -1px 0 #f9f9f9"></div>
<div class="a" style="left:40px;top:449px;width:118px;height:118px;background:#fff;border:1px solid #c4c4c4;border-right-color:#c9c9c9;border-bottom-color:#d4d4d4;border-radius:3px"></div>
<div class="a" style="left:57px;top:466px;width:84px;height:84px;background:#fff;border:1px solid #cccccc;border-radius:4px"></div>
<svg style="left:75px;top:484px" width="48" height="48"><circle cx="24" cy="24" r="24" fill="#5867e8"/><rect x="9" y="11.5" width="14" height="23" rx="0.8" fill="#fff"/><circle cx="13.1" cy="16.4" r="1.5" fill="#5867e8"/><circle cx="18.4" cy="16.4" r="1.5" fill="#5867e8"/><circle cx="13.1" cy="21.2" r="1.5" fill="#5867e8"/><circle cx="18.4" cy="21.2" r="1.5" fill="#5867e8"/><circle cx="13.1" cy="26.1" r="1.5" fill="#5867e8"/><circle cx="18.4" cy="26.1" r="1.5" fill="#5867e8"/><circle cx="13.1" cy="31" r="1.5" fill="#5867e8"/><path d="M21 37 Q19.3 37 19.3 34.5 Q19.6 30.5 24 28.8 L26.2 27.9 Q27.2 27.2 26.5 26.2 Q24 23.5 24 20 Q24 15 29.1 15 Q34.2 15 34.2 20 Q34.2 23.5 31.7 26.2 Q31 27.2 32 27.9 L34.5 28.8 Q38.8 30.5 38.8 34.5 Q38.8 37 36.5 37 Z" fill="#fff" stroke="#5867e8" stroke-width="2.6" stroke-linejoin="round"/><path d="M21 37 Q19.3 37 19.3 34.5 Q19.6 30.5 24 28.8 L26.2 27.9 Q27.2 27.2 26.5 26.2 Q24 23.5 24 20 Q24 15 29.1 15 Q34.2 15 34.2 20 Q34.2 23.5 31.7 26.2 Q31 27.2 32 27.9 L34.5 28.8 Q38.8 30.5 38.8 34.5 Q38.8 37 36.5 37 Z" fill="#fff"/></svg>
<div class="t" style="left:169.4px;top:460px;font-size:12.61px;line-height:16px;color:#2f6ab4">Accounts List</div>
<div class="t" style="left:169.4px;top:479px;font-size:12.74px;line-height:16px;color:#181818">Listado de todas las cuentas de la empresa.</div>
<div class="a" style="left:660px;top:448px;width:601px;height:120px;background:#f3f3f3;border:1px solid #c4c4c4;border-radius:3px;box-shadow:inset -1px -1px 0 #f9f9f9"></div>
<div class="a" style="left:661px;top:449px;width:118px;height:118px;background:#fff;border:1px solid #c4c4c4;border-right-color:#c9c9c9;border-bottom-color:#d4d4d4;border-radius:3px"></div>
<div class="a" style="left:678px;top:466px;width:84px;height:84px;background:#fff;border:1px solid #cccccc;border-radius:4px"></div>
<svg style="left:696px;top:484px" width="48" height="48"><circle cx="24" cy="24" r="24" fill="#3ba755"/><path d="M11 17 Q11 16 11.8 15.3 L17.6 9.8 Q18.4 9 19.5 9 H28.5 Q29.6 9 30.4 9.8 L36.2 15.3 Q37 16 37 17 V36.3 Q37 38.8 34.5 38.8 H13.5 Q11 38.8 11 36.3Z" fill="#fff"/><circle cx="24.2" cy="13.6" r="2.3" fill="#3ba755"/><rect x="15" y="17.8" width="18" height="17.1" fill="#3ba755"/><rect x="18" y="21.9" width="12" height="3.3" rx="0.8" fill="#fff"/><rect x="19.1" y="27.7" width="9.8" height="3.3" rx="0.8" fill="#fff"/></svg>
<div class="t" style="left:790.4px;top:460px;font-size:12.4px;line-height:16px;color:#2f6ab4">Wines List</div>
<div class="t" style="left:790.4px;top:479px;font-size:12.97px;line-height:16px;color:#181818">Listado de todos los vinos</div>
<div class="a" style="left:1280px;top:448px;width:601px;height:120px;background:#f3f3f3;border:1px solid #c4c4c4;border-radius:3px;box-shadow:inset -1px -1px 0 #f9f9f9"></div>
<div class="a" style="left:1281px;top:449px;width:118px;height:118px;background:#fff;border:1px solid #c4c4c4;border-right-color:#c9c9c9;border-bottom-color:#d4d4d4;border-radius:3px"></div>
<div class="a" style="left:1298px;top:466px;width:84px;height:84px;background:#fff;border:1px solid #cccccc;border-radius:4px"></div>
<svg style="left:1316px;top:484px" width="48" height="48"><circle cx="24" cy="24" r="24" fill="#06a59a"/><path d="M11.2 23.4 L20.3 32.3 L37.3 15.3" fill="none" stroke="#fff" stroke-width="3.6" stroke-linejoin="miter"/></svg>
<div class="t" style="left:1410.4px;top:460px;font-size:13px;line-height:16px;color:#2f6ab4">Analitic Accounts</div>
<div class="t" style="left:1410.4px;top:479px;font-size:12.97px;line-height:16px;color:#181818">Report and Dashboard of Accounts</div>
<div class="a" style="left:39px;top:620px;width:601px;height:120px;background:#f3f3f3;border:1px solid #c4c4c4;border-radius:3px;box-shadow:inset -1px -1px 0 #f9f9f9"></div>
<div class="a" style="left:40px;top:621px;width:118px;height:118px;background:#fff;border:1px solid #c4c4c4;border-right-color:#c9c9c9;border-bottom-color:#d4d4d4;border-radius:3px"></div>
<div class="a" style="left:57px;top:638px;width:84px;height:84px;background:#fff;border:1px solid #cccccc;border-radius:4px"></div>
<svg style="left:75px;top:656px" width="48" height="48"><circle cx="24" cy="24" r="24" fill="#3ba755"/><rect x="10.3" y="11.5" width="27.4" height="27.3" rx="3.2" fill="#fff"/><path d="M15 11 H33 V14.8 Q33 17.8 30 17.8 H18 Q15 17.8 15 14.8Z" fill="#3ba755"/><path d="M17.8 15 V11.5 Q17.8 9 20.3 9 H28 Q30.5 9 30.5 11.5 V15Z" fill="#fff"/><circle cx="17.3" cy="22.4" r="1.6" fill="#3ba755"/><rect x="20.8" y="20.9" width="11.3" height="3" rx="0.6" fill="#3ba755"/><circle cx="17.3" cy="27.3" r="1.6" fill="#3ba755"/><rect x="20.8" y="25.8" width="11.3" height="3" rx="0.6" fill="#3ba755"/><circle cx="17.3" cy="32.2" r="1.6" fill="#3ba755"/><rect x="20.8" y="30.700000000000003" width="11.3" height="3" rx="0.6" fill="#3ba755"/></svg>
<div class="t" style="left:169.4px;top:632px;font-size:12.94px;line-height:16px;color:#2f6ab4">Reports Account with Wines</div>
<div class="t" style="left:169.4px;top:651px;font-size:12.7px;line-height:16px;color:#181818">Analisis de Accounts con Wines.</div>
<div class="a" style="left:660px;top:620px;width:601px;height:120px;background:#f3f3f3;border:1px solid #c4c4c4;border-radius:3px;box-shadow:inset -1px -1px 0 #f9f9f9"></div>
<div class="a" style="left:661px;top:621px;width:118px;height:118px;background:#fff;border:1px solid #c4c4c4;border-right-color:#c9c9c9;border-bottom-color:#d4d4d4;border-radius:3px"></div>
<div class="a" style="left:678px;top:638px;width:84px;height:84px;background:#fff;border:1px solid #cccccc;border-radius:4px"></div>
<svg style="left:696px;top:656px" width="48" height="48"><circle cx="24" cy="24" r="24" fill="#9050e9"/><rect x="8.5" y="12.9" width="31" height="21.7" rx="3" fill="#fff"/><ellipse cx="18.7" cy="20" rx="3.2" ry="3.5" fill="#9050e9"/><path d="M17.2 23 H20.2 L20.5 25 Q24.9 26 24.9 29 Q24.9 31 23 31 H14.8 Q12.9 31 12.9 29 Q12.9 26 17 25Z" fill="#9050e9"/><rect x="25.2" y="18.9" width="10.4" height="3.9" rx="1.6" fill="#9050e9"/><rect x="28.4" y="24.7" width="6.9" height="3.5" rx="1.5" fill="#9050e9"/></svg>
<div class="t" style="left:790.4px;top:632px;font-size:12.62px;line-height:16px;color:#2f6ab4">Contacts</div>
<div class="t" style="left:790.4px;top:651px;font-size:12.99px;line-height:16px;color:#181818">Listado de todos Contactos.</div>
<div class="a" style="left:1280px;top:620px;width:601px;height:120px;background:#f3f3f3;border:1px solid #c4c4c4;border-radius:3px;box-shadow:inset -1px -1px 0 #f9f9f9"></div>
<div class="a" style="left:1281px;top:621px;width:118px;height:118px;background:#fff;border:1px solid #c4c4c4;border-right-color:#c9c9c9;border-bottom-color:#d4d4d4;border-radius:3px"></div>
<div class="a" style="left:1298px;top:638px;width:84px;height:84px;background:#fff;border:1px solid #cccccc;border-radius:4px"></div>
<svg style="left:1316px;top:656px" width="48" height="48"><circle cx="24" cy="24" r="24" fill="#1b96ff"/><path d="M16.4 11.5 Q16.4 9 18.9 9 H36.3 Q38.8 9 38.8 11.5 V28.7 Q38.8 31.2 36.3 31.2 H34 V14 H16.4Z" fill="#fff"/><rect x="9" y="16.4" width="22.4" height="22.4" rx="3" fill="#fff"/><rect x="14" y="21.15" width="12.8" height="2.5" rx="1.25" fill="#1b96ff"/><rect x="14" y="26.25" width="12.8" height="2.5" rx="1.25" fill="#1b96ff"/><rect x="14" y="31.049999999999997" width="12.8" height="2.5" rx="1.25" fill="#1b96ff"/></svg>
<div class="t" style="left:1410.4px;top:632px;font-size:12.89px;line-height:16px;color:#2f6ab4">Analitics Collections</div>
<div class="t" style="left:1410.4px;top:651px;font-size:12.8px;line-height:16px;color:#181818">Colecciones de reports y dashboards.</div>
<div class="a" style="left:13px;top:774px;width:1894px;height:1px;background:#d8d8d8"></div>
<div class="t" style="left:0;top:789px;width:1920px;text-align:center;font-size:13px;line-height:16px;font-weight:bold;color:#181818">© 2024 Developed by NTT DATA</div>
<div class="a" style="left:0;top:1032px;width:1920px;height:48px;background:#dadada;border-top:1px solid #b5b5b5"></div>
<svg style="left:19px;top:1043px" width="26" height="26"><defs><linearGradient id="sun" x1="0.2" y1="0.1" x2="0.9" y2="0.8"><stop offset="0" stop-color="#f2b52a"/><stop offset="1" stop-color="#f06a0e"/></linearGradient><linearGradient id="cld" x1="0" y1="0" x2="0" y2="1"><stop offset="0" stop-color="#b6d0f7"/><stop offset="1" stop-color="#dde9fa"/></linearGradient></defs><circle cx="12" cy="12" r="10" fill="url(#sun)"/><path d="M6 23.8 Q4 23.8 4.1 21.5 Q4.3 19 7 18.8 Q7.5 12 13.5 12 Q17 12 18.5 15.5 Q20.5 15 22.5 16 Q24.2 17.2 24 20.5 Q23.8 23.8 21.5 23.8Z" fill="url(#cld)" stroke="#84a9e8" stroke-width="0.8"/></svg>
<div class="t" style="left:50px;top:1042px;font-size:10.5px;line-height:12px;color:#1a1a1a">36°C</div>
<div class="t" style="left:50px;top:1057px;font-size:11.5px;line-height:14px;color:#3a3a3a">Parc. soleado</div>
<svg style="left:639px;top:1045px" width="23" height="23"><defs><linearGradient id="wl" x1="0" y1="0" x2="1" y2="1"><stop offset="0" stop-color="#4cc2ff"/><stop offset="1" stop-color="#0067c0"/></linearGradient></defs><rect x="0" y="0" width="11" height="11" fill="url(#wl)"/><rect x="12" y="0" width="11" height="11" fill="url(#wl)"/><rect x="0" y="12" width="11" height="11" fill="url(#wl)"/><rect x="12" y="12" width="11" height="11" fill="url(#wl)"/></svg>
<div class="a" style="left:675px;top:1040px;width:219px;height:31px;border-radius:16px;background:#f2f2f2;border:1px solid #c6c6c6"></div>
<svg style="left:686px;top:1048px" width="16" height="16"><circle cx="6.5" cy="6.5" r="5.2" fill="none" stroke="#1a1a1a" stroke-width="1.6"/><path d="M10.3 10.3 L14.5 14.5" stroke="#1a1a1a" stroke-width="1.8"/></svg>
<div class="t" style="left:712px;top:1048px;font-size:13.5px;line-height:16px;color:#5c5c5c">Búsqueda</div>
<svg style="left:906px;top:1045px" width="25" height="23"><rect x="7" y="0" width="17" height="16" rx="1" fill="#f4f4f4"/><rect x="0" y="6" width="18" height="17" rx="1" fill="#202020"/><rect x="7" y="6" width="11" height="10" fill="#a8a8a8"/></svg>
<svg style="left:949px;top:1043px" width="26" height="26"><path d="M13 2 L24 13 L13 24 L2 13Z" fill="#7fb2ef"/><path d="M13 13 L19 7 L24 13 L18.5 18.5Z" fill="#4faa56"/><path d="M7.5 18.5 L13 13 L18.5 18.5 L13 24Z" fill="#f7d44d"/><path d="M13 2 L19 7 L13 13 L7.5 7.5Z" fill="#e9707a"/><path d="M2 13 L7.5 7.5 L13 13 L7.5 18.5Z" fill="#9ab8ea"/></svg>
<div class="a" style="left:959px;top:1072px;width:6px;height:3px;border-radius:2px;background:#6f6f6f"></div>
<svg style="left:994px;top:1045px" width="24" height="22"><path d="M4.5 2 H23.5 L20 20 H1Z" fill="#2a6fd6"/><path d="M6 6 L11 10.5 L4.5 15" fill="none" stroke="#fff" stroke-width="2"/><path d="M11 16 H16" stroke="#fff" stroke-width="2"/></svg>
<svg style="left:1037px;top:1043px" width="27" height="24"><path d="M1 3 Q1 1 3 1 H10 L13 4 H24 Q26 4 26 6 V21 Q26 23 24 23 H3 Q1 23 1 21Z" fill="#e8b00b"/><path d="M1 8 H26 V21 Q26 23 24 23 H3 Q1 23 1 21Z" fill="#ffd24a"/><rect x="7.5" y="15.5" width="12" height="7.5" rx="2" fill="#1f7fd8"/><rect x="10" y="18" width="7" height="1" fill="#1660b0"/></svg>
<div class="a" style="left:1047px;top:1072px;width:6px;height:3px;border-radius:2px;background:#6f6f6f"></div>
<div class="a" style="left:1075px;top:1036px;width:39px;height:39px;border-radius:4px;background:#ececec;border:1px solid #d6d6d6"></div>
<svg style="left:1082px;top:1044px" width="25" height="25"><circle cx="12.5" cy="12.5" r="12" fill="#db4437"/><path d="M12.5 12.5 L2.1 6.5 A12 12 0 0 0 12.5 24.5 Z" fill="#0f9d58"/><path d="M12.5 12.5 L12.5 24.5 A12 12 0 0 0 22.9 6.5 Z" fill="#f4b400"/><path d="M12.5 0.5 A12 12 0 0 0 2.1 6.5 L7.3 15.5 L12.5 6.5 H22.9 A12 12 0 0 0 12.5 0.5Z" fill="#db4437"/><circle cx="12.5" cy="12.5" r="5.6" fill="#fff"/><circle cx="12.5" cy="12.5" r="4.5" fill="#1a73e8"/></svg>
<div class="a" style="left:1088px;top:1072px;width:14px;height:3px;border-radius:2px;background:#0067c0"></div>
<svg style="left:1127px;top:1044px" width="24" height="24"><defs><linearGradient id="xg" x1="0" y1="0" x2="0" y2="1"><stop offset="0" stop-color="#f58a3a"/><stop offset="1" stop-color="#e8701c"/></linearGradient></defs><rect width="24" height="24" rx="3.5" fill="url(#xg)"/><path d="M6.3 8 Q6.3 4.8 9.2 4.8 Q11.2 4.8 12 7.2 Q12.8 4.8 14.8 4.8 Q17.7 4.8 17.7 8 Q17.7 10.6 15.4 12 Q17.7 13.4 17.7 16 Q17.7 19.2 14.8 19.2 Q12.8 19.2 12 16.8 Q11.2 19.2 9.2 19.2 Q6.3 19.2 6.3 16 Q6.3 13.4 8.6 12 Q6.3 10.6 6.3 8Z" fill="none" stroke="#fff" stroke-width="2.6" stroke-linejoin="round"/></svg>
<div class="a" style="left:1136px;top:1072px;width:6px;height:3px;border-radius:2px;background:#6f6f6f"></div>
<svg style="left:1171px;top:1044px" width="24" height="24"><path d="M17.5 0.5 L23.5 3.5 V20.5 L17.5 23.5 L7 13.5 L3 17 L0.5 15.5 V8.5 L3 7 L7 10.5Z M17.5 6.5 L11 12 L17.5 17.5Z M3 9.5 V14.5 L5.5 12Z" fill="#1f8ad2" fill-rule="evenodd"/></svg>
<div class="a" style="left:1180px;top:1072px;width:6px;height:3px;border-radius:2px;background:#6f6f6f"></div>
<svg style="left:1213px;top:1043px" width="28" height="28"><path d="M13 2 A11 11 0 1 1 6.5 21.8 L1.5 23.5 L3.2 18.6 A11 11 0 0 1 13 2Z" fill="none" stroke="#1f8c47" stroke-width="2.4"/><path d="M8.5 8 Q9 6.8 10 7 L11.3 9.8 L10.4 11.2 Q11.8 13.9 14.6 15.3 L16 14.3 L18.6 15.7 Q18.7 17 17.3 17.6 Q14.5 18.5 10.8 15 Q7.3 11.5 8.5 8Z" fill="#1f8c47"/></svg>
<div class="a" style="left:1226px;top:1038px;width:18px;height:18px;border-radius:9px;background:#0a68c5;border:1.5px solid #e6e6e6"></div>
<div class="t" style="left:1226px;top:1040px;width:18px;text-align:center;font-size:10px;line-height:13px;font-weight:bold;color:#fff">1</div>
<div class="a" style="left:1224px;top:1072px;width:6px;height:3px;border-radius:2px;background:#6f6f6f"></div>
<svg style="left:1258px;top:1057px" width="28" height="23"><rect x="1.5" y="1.5" width="17" height="17" rx="2" fill="#ececec"/><path d="M3 10 V4 Q3 3 4 3 H12" fill="none" stroke="#d83b1e" stroke-width="2.2" stroke-dasharray="2.2 1.3"/><path d="M3 10 V14" stroke="#d83b1e" stroke-width="2.2" stroke-dasharray="2.2 1.3"/><rect x="4.5" y="5" width="12" height="11" fill="#f6f6f6"/><path d="M16 4 V17 H5" fill="none" stroke="#7a7a7a" stroke-width="2"/><circle cx="22.5" cy="14" r="2.1" fill="none" stroke="#1e90ff" stroke-width="1.5"/><path d="M16 16 L20.8 14.6 M17 17 L15.5 22" stroke="#1e90ff" stroke-width="1.4"/></svg>
<svg style="left:1627px;top:1051px" width="14" height="9"><path d="M1 7.5 L7 1.5 L13 7.5" fill="none" stroke="#1a1a1a" stroke-width="1.3"/></svg>
<svg style="left:1657px;top:1049px" width="18" height="13"><path d="M4 12 Q0.5 12 0.8 8.8 Q1.2 6 4 6 Q5 2 9 1.5 Q13 1.5 14 5.2 Q17.5 5.5 17.2 8.8 Q17 12 14 12Z" fill="#f0f0f0" stroke="#2a2a2a" stroke-width="1.1"/><path d="M1.5 9 Q5 6.5 9 7.5 Q13 6 17 8.5 Q17 12 14 12 H4 Q1 12 1.5 9Z" fill="#a9a9a9"/></svg>
<div class="t" style="left:1694px;top:1051px;font-size:11px;line-height:13px;color:#1a1a1a">ESP</div>
<svg style="left:1730px;top:1046px" width="22" height="20"><path d="M6 8.5 L10.3 8.5 L9.3 2.8 Q9.8 2.2 10.5 2.8 L14.6 8.5 H18.3 Q19.8 8.5 19.8 9.9 Q19.8 11.3 18.3 11.3 H14.6 L10.5 17 Q9.8 17.6 9.3 17 L10.3 11.3 H6 L5.5 13 Q4.2 13.6 4.2 12 V7.8 Q4.2 6.2 5.5 6.8 Z" fill="#e8e8e8" stroke="#1a1a1a" stroke-width="1.15" stroke-linejoin="round"/></svg>
<svg style="left:1756px;top:1049px" width="18" height="14"><path d="M1 4.5 H3.8 L7.6 1 V12.5 L3.8 9 H1Z" fill="none" stroke="#1a1a1a" stroke-width="1.1" stroke-linejoin="round"/><path d="M10 4.8 Q11.3 6.75 10 8.7" fill="none" stroke="#1a1a1a" stroke-width="1.1"/><path d="M12.2 2.6 Q14.6 6.75 12.2 10.9" fill="none" stroke="#1a1a1a" stroke-width="1.1"/><path d="M14.6 1 Q17.6 6.75 14.6 12.5" fill="none" stroke="#a0a0a0" stroke-width="0.9"/></svg>
<svg style="left:1780px;top:1047px" width="20" height="14"><path d="M3.5 3 H1.5 V11.5 H15.2 V3 H7.5" fill="none" stroke="#1a1a1a" stroke-width="1.2" stroke-linejoin="round"/><rect x="15.5" y="6" width="2" height="2.4" fill="#1a1a1a"/><path d="M5 0 L2.8 5.6 H4.6 L4 9.5 L6.6 3.8 H4.8 Z" fill="#1a1a1a"/></svg>
<div class="t" style="left:1805px;top:1042px;width:72px;text-align:right;font-size:11px;line-height:12px;color:#1a1a1a">17:49</div>
<div class="t" style="left:1805px;top:1058px;width:72px;text-align:right;font-size:11.4px;line-height:12px;color:#1a1a1a">24/08/2024</div>
<svg style="left:1885px;top:1048px" width="14" height="16"><path d="M7 1.5 Q11.5 1.5 11.5 6.5 V10 L13 12.5 H1 L2.5 10 V6.5 Q2.5 1.5 7 1.5Z" fill="none" stroke="#1a1a1a" stroke-width="1.1" stroke-linejoin="round"/><path d="M5 13.5 Q7 16 9 13.5" fill="none" stroke="#1a1a1a" stroke-width="1.1"/></svg>
</body></html>
